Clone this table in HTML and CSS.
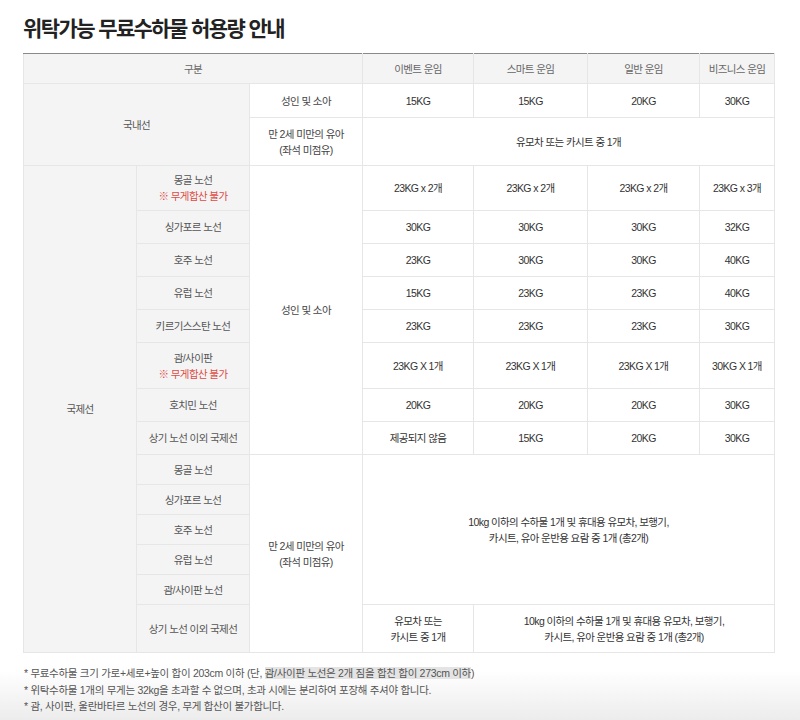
FILE: index.html
```html
<!DOCTYPE html>
<html lang="ko">
<head>
<meta charset="utf-8">
<title>위탁가능 무료수하물 허용량 안내</title>
<link rel="stylesheet" href="styles.css">
</head>
<body>
<div class="page">
  <h1 class="title">위탁가능 무료수하물 허용량 안내</h1>
  <table class="bag">
    <colgroup>
      <col class="c1"><col class="c2"><col class="c3"><col class="c4"><col class="c5"><col class="c6"><col class="c7">
    </colgroup>
    <thead>
      <tr class="h30">
        <th colspan="3">구분</th>
        <th>이벤트 운임</th>
        <th>스마트 운임</th>
        <th>일반 운임</th>
        <th>비즈니스 운임</th>
      </tr>
    </thead>
    <tbody>
      <tr class="h34">
        <td class="lab" colspan="2" rowspan="2">국내선</td>
        <td class="sub">성인 및 소아</td>
        <td>15KG</td><td>15KG</td><td>20KG</td><td>30KG</td>
      </tr>
      <tr class="h48">
        <td class="sub">만 2세 미만의 유아<br>(좌석 미점유)</td>
        <td colspan="4">유모차 또는 카시트 중 1개</td>
      </tr>
      <tr class="h45">
        <td class="lab" rowspan="14">국제선</td>
        <td class="lab">몽골 노선<br><span class="red">※ 무게합산 불가</span></td>
        <td class="sub" rowspan="8">성인 및 소아</td>
        <td>23KG x 2개</td><td>23KG x 2개</td><td>23KG x 2개</td><td>23KG x 3개</td>
      </tr>
      <tr class="h33">
        <td class="lab">싱가포르 노선</td>
        <td>30KG</td><td>30KG</td><td>30KG</td><td>32KG</td>
      </tr>
      <tr class="h33">
        <td class="lab">호주 노선</td>
        <td>23KG</td><td>30KG</td><td>30KG</td><td>40KG</td>
      </tr>
      <tr class="h33">
        <td class="lab">유럽 노선</td>
        <td>15KG</td><td>23KG</td><td>23KG</td><td>40KG</td>
      </tr>
      <tr class="h33">
        <td class="lab">키르기스스탄 노선</td>
        <td>23KG</td><td>23KG</td><td>23KG</td><td>30KG</td>
      </tr>
      <tr class="h46">
        <td class="lab">괌/사이판<br><span class="red">※ 무게합산 불가</span></td>
        <td>23KG X 1개</td><td>23KG X 1개</td><td>23KG X 1개</td><td>30KG X 1개</td>
      </tr>
      <tr class="h33">
        <td class="lab">호치민 노선</td>
        <td>20KG</td><td>20KG</td><td>20KG</td><td>30KG</td>
      </tr>
      <tr class="h33">
        <td class="lab">상기 노선 이외 국제선</td>
        <td>제공되지 않음</td><td>15KG</td><td>20KG</td><td>30KG</td>
      </tr>
      <tr class="h30">
        <td class="lab">몽골 노선</td>
        <td class="sub" rowspan="6">만 2세 미만의 유아<br>(좌석 미점유)</td>
        <td colspan="4" rowspan="5">10kg 이하의 수하물 1개 및 휴대용 유모차, 보행기,<br>카시트, 유아 운반용 요람 중 1개 (총2개)</td>
      </tr>
      <tr class="h30"><td class="lab">싱가포르 노선</td></tr>
      <tr class="h30"><td class="lab">호주 노선</td></tr>
      <tr class="h30"><td class="lab">유럽 노선</td></tr>
      <tr class="h30"><td class="lab">괌/사이판 노선</td></tr>
      <tr class="h48">
        <td class="lab">상기 노선 이외 국제선</td>
        <td>유모차 또는<br>카시트 중 1개</td>
        <td colspan="3">10kg 이하의 수하물 1개 및 휴대용 유모차, 보행기,<br>카시트, 유아 운반용 요람 중 1개 (총2개)</td>
      </tr>
    </tbody>
  </table>
  <ul class="notes">
    <li>* 무료수하물 크기 가로+세로+높이 합이 203cm 이하 (단, <span class="hl">괌/사이판 노선은 2개 짐을 합친 합이 273cm 이하</span>)</li>
    <li>* 위탁수하물 1개의 무게는 32kg을 초과할 수 없으며, 초과 시에는 분리하여 포장해 주셔야 합니다.</li>
    <li>* 괌, 사이판, 울란바타르 노선의 경우, 무게 합산이 불가합니다.</li>
  </ul>
</div>
</body>
</html>
```
FILE: styles.css
```css
html {
  background: linear-gradient(to bottom, #ffffff 0, #ffffff 670px, #ececec 720px);
  min-height: 720px;
}
body {
  margin: 0;
  font-family: "Liberation Sans", "Noto Sans CJK KR", sans-serif;
  color: #333;
}
.page {
  padding: 14px 0 0 23px;
  width: 750px;
}
.title {
  margin: 0 0 12px 0;
  font-family: "Noto Sans CJK KR", sans-serif;
  font-size: 21px;
  font-weight: 700;
  letter-spacing: -1.6px;
  line-height: 27px;
  color: #222;
}
.bag {
  width: 751px;
  table-layout: fixed;
  border-collapse: collapse;
  border-top: 1px solid #8a8a8a;
  font-size: 10.5px;
  letter-spacing: -0.6px;
}
.c1 { width: 113px; }
.c2 { width: 113px; }
.c3 { width: 113px; }
.c4 { width: 111px; }
.c5 { width: 114px; }
.c6 { width: 112px; }
.c7 { width: 75px; }
.bag th,
.bag td {
  border: 1px solid #e6e6e6;
  text-align: center;
  vertical-align: middle;
  padding: 0 2px;
  line-height: 16px;
}
.bag thead th {
  border-top: 1px solid #8a8a8a;
}
.bag th {
  background: #f4f4f4;
  font-weight: 400;
  color: #666;
}
.bag td {
  color: #333;
  background: #fff;
}
.bag td.lab {
  background: #f4f4f4;
  color: #555;
}
.bag td.sub {
  color: #444;
}
.red { color: #dd4b45; }
.h30 { height: 30px; }
.h33 { height: 33px; }
.h34 { height: 34px; }
.h45 { height: 45px; }
.h46 { height: 46px; }
.h48 { height: 48px; }
.notes {
  list-style: none;
  margin: 12px 0 0 0;
  padding: 0 0 0 1px;
  font-size: 10.5px;
  letter-spacing: -0.3px;
  line-height: 16.5px;
  color: #555;
}
.hl {
  background: #e4e4e4;
}
```
